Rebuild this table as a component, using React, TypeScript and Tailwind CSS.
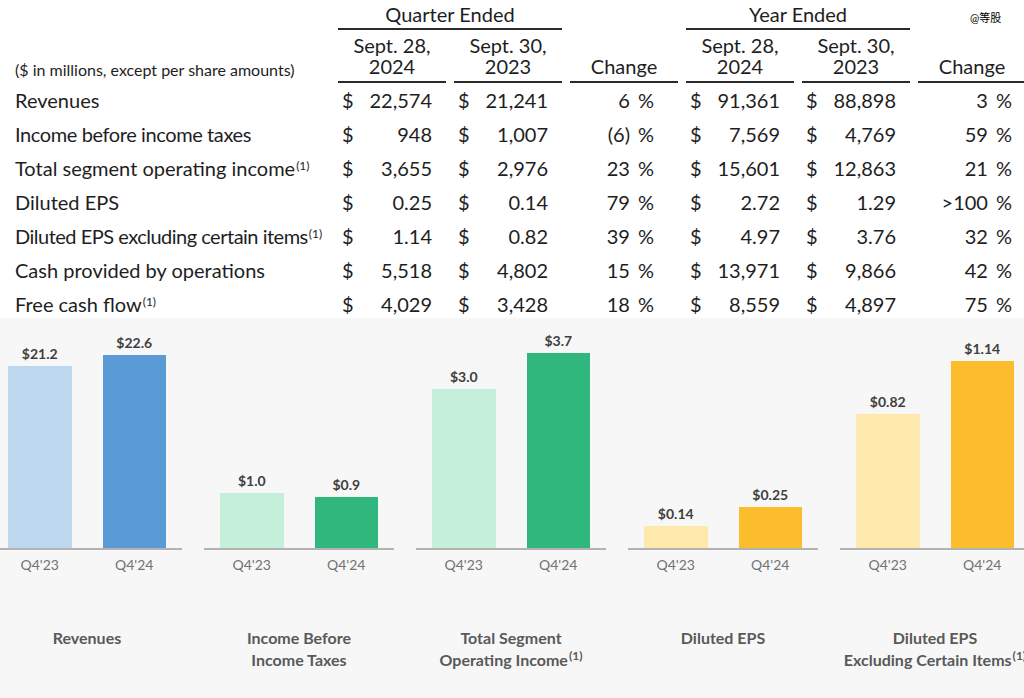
const rows = [
  { label: "Revenues", note: false, tight: "", v: ["22,574", "21,241", "6", "91,361", "88,898", "3"] },
  { label: "Income before income taxes", note: false, tight: "tracking-[-0.4px]", v: ["948", "1,007", "(6)", "7,569", "4,769", "59"] },
  { label: "Total segment operating income", note: true, tight: "", v: ["3,655", "2,976", "23", "15,601", "12,863", "21"] },
  { label: "Diluted EPS", note: false, tight: "", v: ["0.25", "0.14", "79", "2.72", "1.29", ">100"] },
  { label: "Diluted EPS excluding certain items", note: true, tight: "tracking-[-0.5px]", v: ["1.14", "0.82", "39", "4.97", "3.76", "32"] },
  { label: "Cash provided by operations", note: false, tight: "", v: ["5,518", "4,802", "15", "13,971", "9,866", "42"] },
  { label: "Free cash flow", note: true, tight: "", v: ["4,029", "3,428", "18", "8,559", "4,897", "75"] },
];

const charts = [
  { title: ["Revenues"], note: false, light: "bg-[#bdd7ee]", dark: "bg-[#5b9bd5]", bars: [{ v: "$21.2", h: 182 }, { v: "$22.6", h: 193 }] },
  { title: ["Income Before", "Income Taxes"], note: false, light: "bg-[#c5eedb]", dark: "bg-[#30b77e]", bars: [{ v: "$1.0", h: 55 }, { v: "$0.9", h: 51 }] },
  { title: ["Total Segment", "Operating Income"], note: true, light: "bg-[#c5eedb]", dark: "bg-[#30b77e]", bars: [{ v: "$3.0", h: 159 }, { v: "$3.7", h: 195 }] },
  { title: ["Diluted EPS"], note: false, light: "bg-[#fee8ab]", dark: "bg-[#fbbd2b]", bars: [{ v: "$0.14", h: 22 }, { v: "$0.25", h: 41 }] },
  { title: ["Diluted EPS", "Excluding Certain Items"], note: true, light: "bg-[#fee8ab]", dark: "bg-[#fbbd2b]", bars: [{ v: "$0.82", h: 134 }, { v: "$1.14", h: 187 }] },
];

const headers = ["Sept. 28,\n2024", "Sept. 30,\n2023", "Change", "Sept. 28,\n2024", "Sept. 30,\n2023", "Change"];

function Sup() {
  return <sup className="text-[12px] ml-[1px] tracking-normal">(1)</sup>;
}

function DollarCell({ value }: { value: string }) {
  return (
    <div className="h-[34px] flex justify-between items-center pl-[4px] pr-[14px]">
      <span>$</span>
      <span>{value}</span>
    </div>
  );
}

function ChangeCell({ value, pr }: { value: string; pr: string }) {
  return (
    <div className={`h-[34px] flex justify-end items-center gap-2 ${pr}`}>
      <span>{value}</span>
      <span>%</span>
    </div>
  );
}

function SummaryTable() {
  return (
    <div className="h-[318px] text-[20px] text-[#1e1e1e]">
      <div className="grid grid-cols-[330px_repeat(6,108px)] gap-x-2">
        <div />
        <div className="col-span-2 h-[30px] border-b-2 border-[#2a2a2a] text-center leading-[28px]">Quarter Ended</div>
        <div />
        <div className="col-span-2 h-[30px] border-b-2 border-[#2a2a2a] text-center leading-[28px]">Year Ended</div>
        <div />

        <div className="h-[53px] flex items-end pl-[15px] pb-[3px] text-[16px] leading-[21px]">
          ($ in millions, except per share amounts)
        </div>
        {headers.map((h, i) => (
          <div key={i} className="h-[53px] flex items-end justify-center pb-[4px] border-b-2 border-[#2a2a2a]">
            <span className="whitespace-pre-line text-center leading-[21px]">{h}</span>
          </div>
        ))}

        {rows.map((r) => (
          <div key={r.label} className="contents">
            <div className="h-[34px] flex items-center pl-[15px] whitespace-nowrap">
              <span className={r.tight}>
                {r.label}
                {r.note && <Sup />}
              </span>
            </div>
            <DollarCell value={r.v[0]} />
            <DollarCell value={r.v[1]} />
            <ChangeCell value={r.v[2]} pr="pr-[24px]" />
            <DollarCell value={r.v[3]} />
            <DollarCell value={r.v[4]} />
            <ChangeCell value={r.v[5]} pr="pr-[14px]" />
          </div>
        ))}
      </div>
    </div>
  );
}

function Charts() {
  return (
    <div className="h-[380px] bg-[#f7f7f7]">
      <div className="flex gap-[22px] ml-[-8px]">
        {charts.map((c) => (
          <div key={c.title.join(" ")} className="w-[190px] shrink-0 flex flex-col">
            <div className="h-[232px] flex items-end gap-[31px] px-[16px] border-b-2 border-[#b3b3b3]">
              {c.bars.map((b, i) => (
                <div key={i} className="w-[64px] flex flex-col items-center">
                  <span className="text-[14px] leading-[17px] font-bold text-[#404040] mb-[4px]">{b.v}</span>
                  <div className={`w-full ${i === 0 ? c.light : c.dark}`} style={{ height: b.h }} />
                </div>
              ))}
            </div>
            <div className="flex gap-[31px] px-[16px] mt-[6px]">
              {["Q4'23", "Q4'24"].map((q) => (
                <span key={q} className="w-[64px] text-center text-[14px] leading-[17px] text-[#727272]">{q}</span>
              ))}
            </div>
            <div className="mt-[54px] flex flex-col items-center text-[16px] leading-[22px] font-bold text-[#595959] whitespace-nowrap">
              {c.title.map((t, i) => (
                <span key={t}>
                  {t}
                  {c.note && i === c.title.length - 1 && <Sup />}
                </span>
              ))}
            </div>
          </div>
        ))}
      </div>
    </div>
  );
}

export default function App() {
  return (
    <div className="relative w-[1024px] h-[698px] overflow-hidden bg-white [font-family:Lato,'Noto_Sans_CJK_SC',sans-serif]">
      <SummaryTable />
      <Charts />
      <span className="absolute top-[11px] left-[970px] text-[11px] leading-[14px] text-black">@等股</span>
    </div>
  );
}
